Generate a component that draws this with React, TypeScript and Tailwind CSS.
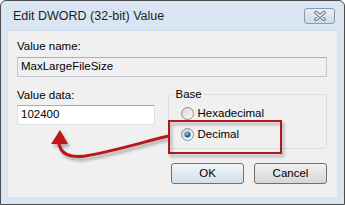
import type React from "react";

const font = { fontFamily: '"Liberation Sans", Arial, sans-serif' };

const Radio: React.FC<{ checked?: boolean; label: string }> = ({ checked, label }) => (
  <label className="flex items-center gap-[4px] h-[15px]">
    <svg width="13" height="13" viewBox="0 0 13 13">
      <defs>
        <linearGradient id={checked ? "rc" : "ru"} x1="0" y1="0" x2="1" y2="1">
          <stop offset="0" stopColor="#cfcfcf" />
          <stop offset="1" stopColor="#ffffff" />
        </linearGradient>
        <radialGradient id="dot" cx="0.4" cy="0.35" r="0.7">
          <stop offset="0" stopColor="#8fd0f5" />
          <stop offset="0.6" stopColor="#1e70b8" />
          <stop offset="1" stopColor="#0e3f7a" />
        </radialGradient>
      </defs>
      <circle cx="6.5" cy="6.5" r="6" fill={checked ? "url(#rc)" : "url(#ru)"} stroke="#8e8f8f" />
      {checked ? <circle cx="6.5" cy="6.5" r="3" fill="url(#dot)" /> : null}
    </svg>
    <span className="text-[11.5px] text-black leading-[15px]">{label}</span>
  </label>
);

const Button: React.FC<{ children: React.ReactNode; primary?: boolean }> = ({ children, primary }) => (
  <button
    className={
      primary
        ? "w-[73px] h-[21px] rounded-[3px] border border-[#3c7fb1] bg-gradient-to-b from-[#f1f6fa] to-[#d3dfe9] text-[11.5px] text-black"
        : "w-[73px] h-[21px] rounded-[3px] border border-[#707070] bg-gradient-to-b from-[#f2f2f2] to-[#d6d6d6] text-[11.5px] text-black"
    }
  >
    {children}
  </button>
);

export default function App() {
  return (
    <div className="w-[345px] h-[205px] bg-white" style={font}>
      <div className="relative w-[345px] h-[205px] flex flex-col border border-[#4b4b4b] rounded-t-[6px] bg-[#d9e5f3]">
        {/* title bar */}
        <div className="h-[29px] flex items-center justify-between pl-[12px] pr-[9px]">
          <span className="text-[12.5px] text-[#1e1e1e] pt-[2px]">Edit DWORD (32-bit) Value</span>
          <div className="w-[31px] h-[16px] rounded-[3px] border border-[#8a99ad] bg-gradient-to-b from-[#e6edf6] to-[#d0dbe8] flex items-center justify-center">
            <svg width="12" height="10" viewBox="0 0 12 10">
              <path d="M2 1.5 L10 8.5 M10 1.5 L2 8.5" stroke="#5b6470" strokeWidth="3.4" strokeLinecap="round" />
              <path d="M2 1.5 L10 8.5 M10 1.5 L2 8.5" stroke="#ffffff" strokeWidth="1.6" strokeLinecap="round" />
            </svg>
          </div>
        </div>

        {/* client area */}
        <div className="flex-1 mx-[7px] mb-[7px] bg-[#f0f0f0] border-t border-[#c9d6e6] flex flex-col pl-[9px] pr-[10px] pt-[8px]">
          <span className="text-[11.5px] leading-[15px] text-black">Value name:</span>
          <div className="mt-[3px] h-[20px] border border-[#c7c9ce] border-t-[#abadb3] bg-[#f0f0f0] flex items-center px-[3px] text-[11.5px] text-black">
            MaxLargeFileSize
          </div>

          <div className="flex mt-[10px]">
            <div className="flex flex-col w-[138px]">
              <span className="mt-[1px] text-[11.5px] leading-[15px] text-black">Value data:</span>
              <div className="mt-[2px] h-[20px] border border-[#dbdfe6] border-t-[#abadb3] bg-white flex items-center px-[3px] text-[11.5px] text-black">
                102400
              </div>
            </div>
            <fieldset className="ml-[13px] w-[160px] h-[62px] border border-[#d5dfe5] rounded-[3px] p-0">
              <legend className="ml-[5px] px-[2px] text-[11.5px] leading-[15px] text-black">Base</legend>
              <div className="flex flex-col gap-[6px] pl-[12px] pt-[4px]">
                <Radio label="Hexadecimal" />
                <Radio checked label="Decimal" />
              </div>
            </fieldset>
          </div>

          <div className="flex justify-end gap-[10px] mt-[14px]">
            <Button primary>OK</Button>
            <Button>Cancel</Button>
          </div>
        </div>

        {/* annotation overlay */}
        <svg className="absolute left-[-1px] top-[-1px] pointer-events-none" width="345" height="205" viewBox="0 0 345 205">
          <defs>
            <filter id="sh" x="-20%" y="-50%" width="140%" height="200%">
              <feGaussianBlur stdDeviation="1.6" />
            </filter>
          </defs>
          <g opacity="0.45" filter="url(#sh)" transform="translate(2,3)">
            <rect x="169" y="121" width="112" height="32" fill="none" stroke="#555" strokeWidth="2" />
            <path d="M168 136 C140 143 110 152 85 156 C70 158 60 154 59 143" fill="none" stroke="#555" strokeWidth="3" />
            <path d="M60 130 L51 144 L68 144 Z" fill="#555" />
          </g>
          <rect x="169" y="121" width="112" height="32" fill="none" stroke="#b01a1f" strokeWidth="2" />
          <path d="M168 136 C140 143 110 152 85 156 C70 158 60 154 59 143" fill="none" stroke="#bd161c" strokeWidth="3" />
          <path d="M60 130 L51 144 L68 144 Z" fill="#bd161c" />
        </svg>
      </div>
    </div>
  );
}
